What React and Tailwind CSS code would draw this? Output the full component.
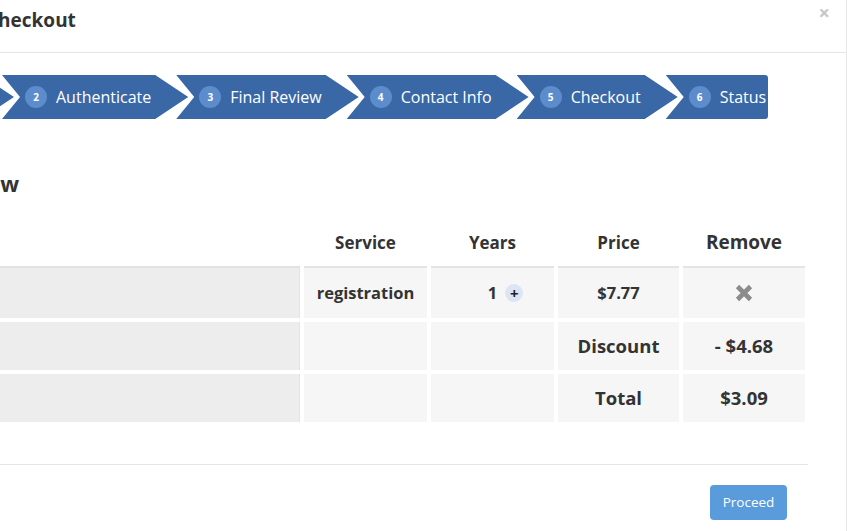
import React from "react";

const font = { fontFamily: "'Open Sans', Lato, sans-serif" };

function Step({ n, label, first, last }) {
  const clip = last
    ? "[clip-path:polygon(0_0,100%_0,100%_100%,0_100%,18px_50%)] rounded-r-[3px]"
    : first
    ? "[clip-path:polygon(0_0,calc(100%-33px)_0,100%_50%,calc(100%-33px)_100%,0_100%)]"
    : "[clip-path:polygon(0_0,calc(100%-33px)_0,100%_50%,calc(100%-33px)_100%,0_100%,18px_50%)]";
  return (
    <div
      className={`h-[44px] bg-[#3a68a6] flex items-center shrink-0 ${clip} ${
        first ? "w-[80px]" : "-ml-[12px] pl-[23px]"
      } ${last ? "pr-[2px]" : "pr-[37px]"}`}
    >
      {!first && (
        <>
          <span className="w-[22px] h-[22px] rounded-full bg-[#5c8ccc] text-white text-[10px] font-bold flex items-center justify-center">
            {n}
          </span>
          <span className="ml-[9px] text-white text-[16px] whitespace-nowrap">{label}</span>
        </>
      )}
    </div>
  );
}

function XIcon() {
  return (
    <svg width="18" height="18" viewBox="0 0 18 18">
      <path d="M2.5 2.5 L15.5 15.5 M15.5 2.5 L2.5 15.5" stroke="#8c8c8c" strokeWidth="4.6" />
    </svg>
  );
}

export default function App() {
  const cols = "grid grid-cols-[300px_123px_123px_121px_122px] gap-x-[4px]";
  const cell = "bg-[#f6f6f6] flex items-center justify-center text-[#333] font-bold text-[16.5px]";
  const first = "bg-[#ededed] border-r border-[#e2e2e2]";
  return (
    <div className="w-[847px] h-[531px] overflow-hidden bg-white relative" style={font}>
      <div className="h-[53px] border-b border-[#e5e5e5] flex justify-between items-start">
        <div className="-ml-[14px] pt-[8px] text-[19px] leading-[24px] font-bold text-[#333]">Checkout</div>
        <div className="mr-[17px] mt-[3px] text-[20px] font-bold text-[#c6c6c6] leading-[20px]">×</div>
      </div>
      <div className="pr-[40px]">
        <div className="mt-[22px] flex -ml-[66px]">
          <Step n={1} first />
          <Step n={2} label="Authenticate" />
          <Step n={3} label="Final Review" />
          <Step n={4} label="Contact Info" />
          <Step n={5} label="Checkout" />
          <Step n={6} label="Status" last />
        </div>
        <div className="mt-[50px] w-[19px] flex justify-end">
          <div className="whitespace-nowrap text-[22px] leading-[28px] font-bold text-[#333]">Final Review</div>
        </div>
        <div className={`${cols} mt-[31px] h-[38px] pb-[8px]`}>
          <div />
          <div className="flex items-center justify-center font-bold text-[17px] text-[#333]">Service</div>
          <div className="flex items-center justify-center font-bold text-[17px] text-[#333]">Years</div>
          <div className="flex items-center justify-center font-bold text-[17px] text-[#333]">Price</div>
          <div className="flex items-center justify-center font-bold text-[19px] text-[#333] -mt-[2px]">Remove</div>
        </div>
        <div className={`${cols} gap-y-[4px] grid-rows-[52px_48px_48px]`}>
          <div className={`${first} border-t-2 border-t-[#e2e2e2]`} />
          <div className={`${cell} border-t-2 border-[#e4e4e4]`}>registration</div>
          <div className={`${cell} border-t-2 border-[#e4e4e4]`}>
            <span className="relative">
              1
              <span className="absolute left-full top-1/2 -translate-y-1/2 ml-[8px] w-[18px] h-[18px] rounded-full bg-[#dce4f6] text-[#222] text-[15px] font-bold leading-none flex items-center justify-center">
                +
              </span>
            </span>
          </div>
          <div className={`${cell} border-t-2 border-[#e4e4e4]`}>$7.77</div>
          <div className={`${cell} border-t-2 border-[#e4e4e4]`}>
            <XIcon />
          </div>

          <div className={first} />
          <div className={cell} />
          <div className={cell} />
          <div className={`${cell} text-[18.5px]`}>Discount</div>
          <div className={`${cell} text-[18.5px]`}>- $4.68</div>

          <div className={first} />
          <div className={cell} />
          <div className={cell} />
          <div className={`${cell} text-[18.5px]`}>Total</div>
          <div className={`${cell} text-[18.5px]`}>$3.09</div>
        </div>
        <div className="mt-[42px] h-px bg-[#e5e5e5] w-[808px]" />
        <div className="w-[808px] flex justify-end pr-[21px] mt-[20px]">
          <button className="w-[77px] h-[35px] rounded-[4px] bg-[#5a9bdc] text-white text-[13.5px]">Proceed</button>
        </div>
      </div>
      <div className="absolute right-0 top-0 bottom-0 w-[1px] bg-[#e8e8e8]" />
    </div>
  );
}
